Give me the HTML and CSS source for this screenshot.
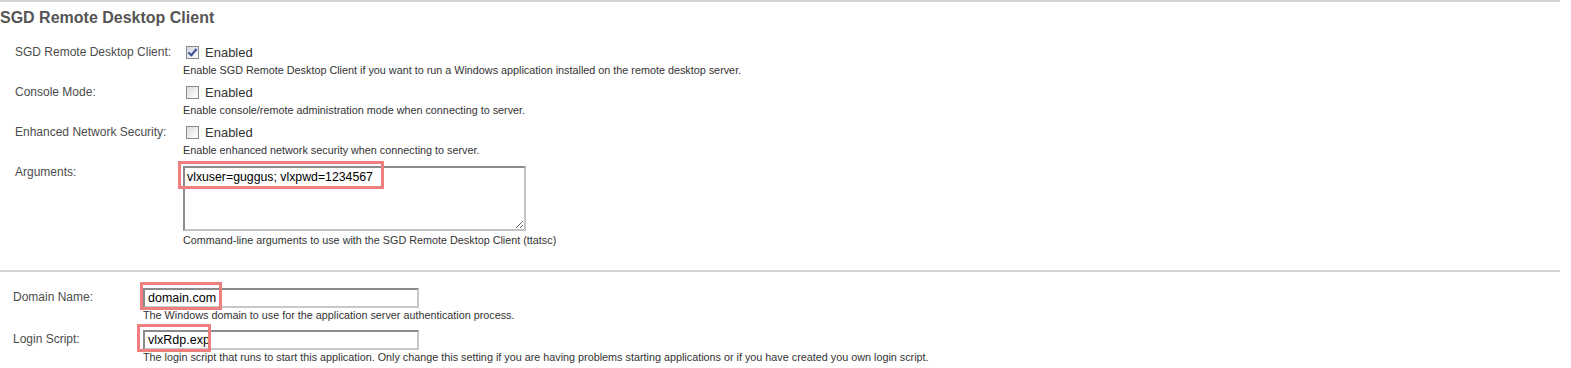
FILE: index.html
```html
<!DOCTYPE html>
<html lang="en">
<head>
    <meta charset="UTF-8">
    <title>SGD Remote Desktop Client</title>
    <link rel="stylesheet" href="styles.css">
</head>
<body>
    <div class="settings">
        <div class="section section-rdc">
            <h2 class="section-title">SGD Remote Desktop Client</h2>

            <div class="row">
                <div class="label">SGD Remote Desktop Client:</div>
                <div class="field">
                    <label class="check-line"><span class="checkbox checked"></span>Enabled</label>
                    <div class="help">Enable SGD Remote Desktop Client if you want to run a Windows application installed on the remote desktop server.</div>
                </div>
            </div>

            <div class="row">
                <div class="label">Console Mode:</div>
                <div class="field">
                    <label class="check-line"><span class="checkbox"></span>Enabled</label>
                    <div class="help">Enable console/remote administration mode when connecting to server.</div>
                </div>
            </div>

            <div class="row">
                <div class="label">Enhanced Network Security:</div>
                <div class="field">
                    <label class="check-line"><span class="checkbox"></span>Enabled</label>
                    <div class="help">Enable enhanced network security when connecting to server.</div>
                </div>
            </div>

            <div class="row row-args">
                <div class="label">Arguments:</div>
                <div class="field">
                    <div class="textarea-wrap">
                        <textarea class="textarea" spellcheck="false">vlxuser=guggus; vlxpwd=1234567</textarea>
                        <span class="mark mark-args"></span>
                    </div>
                    <div class="help">Command-line arguments to use with the SGD Remote Desktop Client (ttatsc)</div>
                </div>
            </div>
        </div>

        <div class="section section-server">
            <div class="row row-input">
                <div class="label">Domain Name:</div>
                <div class="field">
                    <div class="input-wrap">
                        <input class="text-input" type="text" value="domain.com" spellcheck="false">
                        <span class="mark mark-domain"></span>
                    </div>
                    <div class="help">The Windows domain to use for the application server authentication process.</div>
                </div>
            </div>

            <div class="row row-input">
                <div class="label">Login Script:</div>
                <div class="field">
                    <div class="input-wrap">
                        <input class="text-input" type="text" value="vlxRdp.exp" spellcheck="false">
                        <span class="mark mark-login"></span>
                    </div>
                    <div class="help">The login script that runs to start this application. Only change this setting if you are having problems starting applications or if you have created you own login script.</div>
                </div>
            </div>
        </div>
    </div>
</body>
</html>
```

FILE: styles.css
```css
body {
    margin: 0;
    padding: 0;
    background-color: #fff;
    font-family: "Liberation Sans", Arial, sans-serif;
    color: #333;
}
.settings {
    width: 1560px;
}
.section-rdc {
    border-top: 2px solid #d4d4d4;
    height: 268px;
}
.section-server {
    border-top: 2px solid #d4d4d4;
    padding-top: 16px;
}
.section-title {
    margin: 0;
    padding: 6px 0 0 0;
    height: 36px;
    font-size: 16px;
    line-height: 19px;
    font-weight: bold;
    color: #555;
}
.row {
    display: grid;
    grid-template-columns: 168px 1fr;
    padding-left: 15px;
    height: 40px;
}
.label {
    font-size: 12px;
    line-height: 16px;
    color: #4c4c4c;
}
.field {
    display: flex;
    flex-direction: column;
}
.check-line {
    display: flex;
    align-items: center;
    height: 16px;
    font-size: 13px;
    color: #333;
}
.checkbox {
    display: inline-block;
    box-sizing: border-box;
    width: 13px;
    height: 13px;
    margin: 0 6px 0 3px;
    border: 1px solid #8a8a8a;
    background: linear-gradient(135deg, #dcdcdc 0%, #f4f4f4 70%, #fff 100%);
    position: relative;
}
.checkbox.checked {
    background: linear-gradient(135deg, #cfd6e6 0%, #eef1f7 70%, #fff 100%);
}
.checkbox.checked::after {
    content: "";
    position: absolute;
    left: 3px;
    top: 0px;
    width: 3px;
    height: 7px;
    border: solid #3a4f8f;
    border-width: 0 2px 2px 0;
    transform: rotate(40deg);
}
.help {
    margin-top: 3px;
    font-size: 10.8px;
    line-height: 14px;
    color: #333;
    white-space: nowrap;
}
.row-args {
    height: auto;
}
.textarea-wrap,
.input-wrap {
    position: relative;
}
.textarea {
    display: block;
    box-sizing: border-box;
    width: 343px;
    height: 65px;
    margin: 2px 0 0 0;
    padding: 1px 2px;
    border: 2px solid #c4c4c4;
    border-top-color: #8c8c8c;
    border-left-color: #8c8c8c;
    font-family: "Liberation Sans", Arial, sans-serif;
    font-size: 12.3px;
    line-height: 16px;
    color: #000;
    resize: both;
    outline: none;
}
.row-args .help {
    margin-top: 2px;
}
.section-server .row {
    grid-template-columns: 130px 1fr;
    padding-left: 13px;
    height: 42px;
}
.section-server .label {
    padding-top: 1px;
}
.text-input {
    display: block;
    box-sizing: border-box;
    width: 276px;
    height: 20px;
    margin: 0;
    padding: 0 3px;
    border: 2px solid #c8c8c8;
    border-top-color: #8a8a8a;
    border-left-color: #8a8a8a;
    font-family: "Liberation Sans", Arial, sans-serif;
    font-size: 12.5px;
    color: #000;
    outline: none;
}
.row-input .help {
    margin-top: 0;
}
.mark {
    position: absolute;
    box-sizing: border-box;
    border: 3px solid #ee7f7f;
    pointer-events: none;
}
.mark-args {
    left: -5px;
    top: -3px;
    width: 206px;
    height: 28px;
}
.mark-domain {
    left: -3px;
    top: -6px;
    width: 82px;
    height: 28px;
}
.mark-login {
    left: -6px;
    top: -6px;
    width: 74px;
    height: 28px;
}
```
